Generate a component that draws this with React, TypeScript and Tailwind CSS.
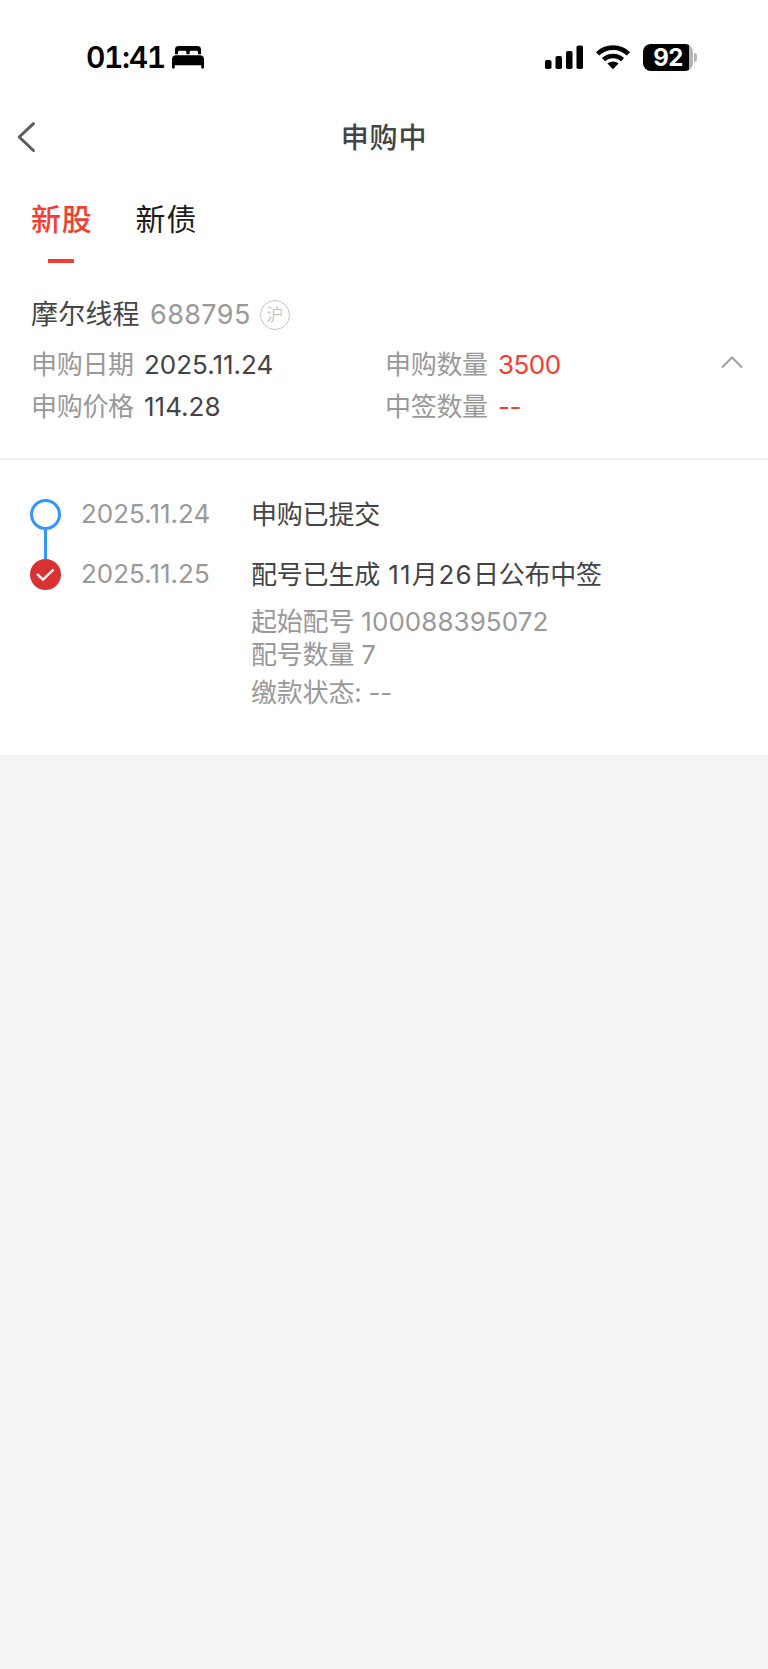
import type { ReactNode } from "react";

function StatusBar() {
  return (
    <div className="flex h-[114px] items-center justify-between pr-[71px] pl-[86px] text-black">
      <div className="flex items-center">
        <span className="w-[78px] text-[30px] leading-[30px] font-semibold tracking-[-1.4px] whitespace-nowrap tabular-nums">01:41</span>
        <svg className="ml-[7px] h-[24px] w-[34px]" viewBox="0 0 34 24" fill="currentColor">
          <path d="M4 9.2V4.4C4 2.3 5.3 1 7.4 1h19.2C28.7 1 30 2.3 30 4.4v4.8h-3V7.4c0-1-.6-1.600-1.600-1.600h-5.200c-1 0-1.600.6-1.600 1.600v1.800h-3.200V7.400c0-1-.6-1.600-1.600-1.600H8.600C7.600 5.800 7 6.400 7 7.400v1.800z" />
          <path d="M1 14.200C1 11.800 2.600 10.200 5 10.200h24c2.400 0 4 1.600 4 4v8.100c0 .8-.6 1.400-1.400 1.400s-1.400-.6-1.400-1.400V20.300H3.800v2c0 .8-.6 1.400-1.400 1.400S1 23.100 1 22.300z" />
        </svg>
      </div>
      <div className="flex items-center">
        <svg className="h-[26px] w-[40px]" viewBox="0 0 40 26" fill="currentColor">
          <rect x="1" y="16" width="6.500" height="9" rx="1.800" />
          <rect x="11.500" y="12" width="6.500" height="13" rx="1.800" />
          <rect x="22" y="7" width="6.500" height="18" rx="1.800" />
          <rect x="32.500" y="1.500" width="6.500" height="23.500" rx="1.800" />
        </svg>
        <svg className="ml-[11px] h-[26px] w-[36px]" viewBox="0 0 36 26" fill="none" stroke="currentColor" strokeWidth="4.600">
          <path d="M2.600 9.800C11 1.500 25 1.500 33.400 9.800" />
          <path d="M8.500 15.700c5.300-5 13.700-5 19 0" />
          <path d="M18 25.200l-5.600-5.600c3.200-2.900 8-2.900 11.200 0z" fill="currentColor" stroke="none" />
        </svg>
        <div className="ml-[12px] flex items-center">
          <div className="flex h-[27px] w-[50px] items-center justify-center overflow-hidden rounded-[8px] bg-[linear-gradient(to_right,#000_46px,#b4b4b4_46px)]">
            <span className="text-[24px] leading-[27px] font-bold tracking-[-0.5px] text-white">92</span>
          </div>
          <div className="ml-[1px] h-[9px] w-[3px] rounded-r-full bg-[#b4b4b4]" />
        </div>
      </div>
    </div>
  );
}

function NavBar() {
  return (
    <div className="grid h-[46px] grid-cols-[60px_1fr_60px] items-center text-[#444]">
      <svg className="ml-[16px] h-[32px] w-[20px]" viewBox="0 0 20 32" fill="none" stroke="#5c5c5c" strokeWidth="3" strokeLinecap="round" strokeLinejoin="round">
        <path d="M17.500 2.700L3.200 16l14.300 13.500" />
      </svg>
      <h1 className="pt-[2px] text-center text-[28px] leading-[44px] font-medium tracking-[0.8px]">申购中</h1>
    </div>
  );
}

function Tabs() {
  return (
    <div className="flex gap-[43px] pt-[37px] pl-[30px] text-[30px] leading-[44px] tracking-[0.8px]">
      <div className="flex flex-col items-center text-[#f43d30]">
        <span className="pl-[1px] font-medium">新股</span>
        <span className="mt-[18px] h-[4px] w-[26px] bg-[#f43d30]" />
      </div>
      <div className="text-[#1c1c1c]">新债</div>
    </div>
  );
}

function Field({ label, value, accent }: { label: string; value: string; accent?: boolean }) {
  return (
    <div className="flex text-[26px]">
      <span className="w-[113px] tracking-[-0.3px] text-[#999]">{label}</span>
      <span className={accent ? "tracking-[-0.5px] text-[#f43d30]" : "text-[#444]"}>{value}</span>
    </div>
  );
}

function Summary() {
  return (
    <section className="border-b-2 border-[#efefef] pt-[32px] pb-[30px] pl-[31px]">
      <div className="flex h-[40px] items-center text-[27px] leading-[40px]">
        <span className="w-[119px] tracking-[0.2px] text-[#444]">摩尔线程</span>
        <span className="w-[110px] tracking-[0.4px] text-[#999]">688795</span>
        <span className="flex h-[30px] w-[30px] items-center justify-center rounded-full border border-[#c4c4c4] text-[17px] leading-[28px] font-light text-[#b0b0b0]">沪</span>
      </div>
      <div className="mt-[9px] flex leading-[42px]">
        <div className="w-[354px]">
          <Field label="申购日期" value="2025.11.24" />
          <Field label="申购价格" value="114.28" />
        </div>
        <div className="w-[335px]">
          <Field label="申购数量" value="3500" accent />
          <Field label="中签数量" value="--" accent />
        </div>
        <svg className="mt-[10px] h-[16px] w-[24px]" viewBox="0 0 24 16" fill="none" stroke="#a0a0a0" strokeWidth="2">
          <path d="M2 13.500L12 3.500l10 10" />
        </svg>
      </div>
    </section>
  );
}

function Step({ icon, date, children }: { icon: ReactNode; date: string; children: ReactNode }) {
  return (
    <div className="flex h-[31px] items-center text-[26px] leading-[31px]">
      {icon}
      <span className="ml-[20px] w-[170px] pb-[2px] text-[#999]">{date}</span>
      <span className="tracking-[-0.2px] whitespace-pre text-[#444]">{children}</span>
    </div>
  );
}

function Timeline() {
  return (
    <section className="h-[295px] pt-[39px] pl-[30px]">
      <Step icon={<span className="h-[31px] w-[31px] rounded-full border-[3px] border-[#3595ff]" />} date="2025.11.24">
        申购已提交
      </Step>
      <div className="ml-[14px] h-[29px] w-[3px] bg-[#3595ff]" />
      <Step
        icon={
          <span className="flex h-[31px] w-[31px] items-center justify-center rounded-full bg-[#d83232]">
            <svg className="h-[31px] w-[31px]" viewBox="0 0 31 31" fill="none" stroke="#fff" strokeWidth="2.400" strokeLinecap="round" strokeLinejoin="round">
              <path d="M7.700 15.700l5.300 5L23 11" />
            </svg>
          </span>
        }
        date="2025.11.25"
      >
        配号已生成 <span className="ml-[1px] tracking-[1.2px]">11</span>月<span className="ml-px tracking-[1.2px]">26</span>日公布中签
      </Step>
      <div className="mt-[15px] ml-[221px] text-[26px] leading-[33px] tracking-[-0.2px] text-[#999]">
        <p>
          起始配号 <span className="tracking-[0.05px]">100088395072</span>
        </p>
        <p>配号数量 7</p>
        <p className="mt-[5px]">缴款状态: --</p>
      </div>
    </section>
  );
}

export default function App() {
  return (
    <div className="min-h-[1669px] w-[768px] bg-[#f4f4f4] font-['Inter','Noto_Sans_CJK_SC',sans-serif]">
      <main className="bg-white">
        <StatusBar />
        <NavBar />
        <Tabs />
        <Summary />
        <Timeline />
      </main>
    </div>
  );
}
